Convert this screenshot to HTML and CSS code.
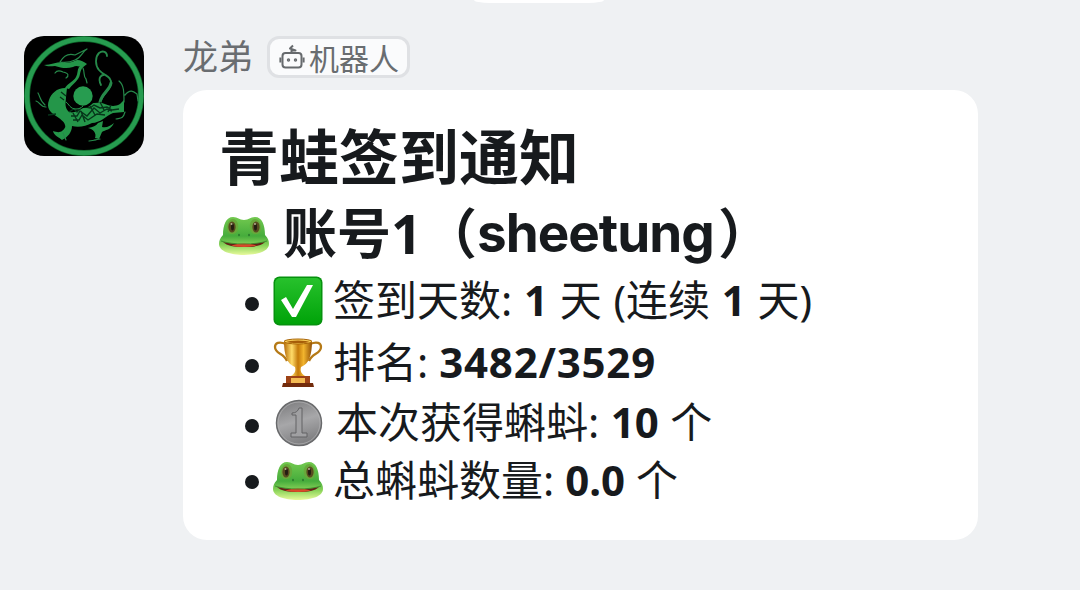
FILE: index.html
```html
<!DOCTYPE html>
<html lang="zh-CN">
<head>
<meta charset="UTF-8">
<title>青蛙签到通知</title>
<link rel="stylesheet" href="styles.css">
</head>
<body>
<svg class="defs" width="0" height="0" aria-hidden="true">
  <defs>
    <linearGradient id="skin" x1="0" y1="0" x2="0" y2="1"><stop offset="0" stop-color="#72c94f"/><stop offset=".5" stop-color="#46ac3c"/><stop offset=".75" stop-color="#8bd45a"/><stop offset="1" stop-color="#e8fa9c"/></linearGradient>
    <linearGradient id="green" x1="0" y1="0" x2="0" y2="1"><stop offset="0" stop-color="#27c12c"/><stop offset="1" stop-color="#00a309"/></linearGradient>
    <linearGradient id="gold" x1="0" y1="0" x2="1" y2="0"><stop offset="0" stop-color="#b56b08"/><stop offset=".28" stop-color="#ffdc69"/><stop offset=".5" stop-color="#c47a09"/><stop offset=".7" stop-color="#f2b52e"/><stop offset="1" stop-color="#925006"/></linearGradient>
    <linearGradient id="silver" x1="0" y1="0" x2=".3" y2="1"><stop offset="0" stop-color="#777779"/><stop offset=".55" stop-color="#a7a7a9"/><stop offset="1" stop-color="#818183"/></linearGradient>
    <symbol id="frog" viewBox="0 0 50 40">
      <path d="M4 19C4 9 7 1 14 1c5 0 6 3 11 3s6-3 11-3c7 0 10 8 10 18 3 3 4 6 4 9 0 7-11 11-25 11S0 35 0 28c0-3 1-6 4-9z" fill="url(#skin)"/>
      <path d="M8 12c0-6 3-9 6-9s6 4 5 9c0 4-3 6-6 6s-5-2-5-6zm34 0c0-6-3-9-6-9s-6 4-5 9c0 4 3 6 6 6s5-2 5-6z" fill="#68a93b"/>
      <ellipse cx="13" cy="11" rx="3.6" ry="5.5" fill="#594b20"/><ellipse cx="37" cy="11" rx="3.6" ry="5.5" fill="#594b20"/>
      <ellipse cx="13.5" cy="11" rx="1.5" ry="3.5" fill="#241d12"/><ellipse cx="36.5" cy="11" rx="1.5" ry="3.5" fill="#241d12"/>
      <circle cx="12.5" cy="8" r="1" fill="#b5b191"/><circle cx="36" cy="8" r="1" fill="#b5b191"/>
      <ellipse cx="20" cy="19" rx=".8" ry="1.2" fill="#28732a"/><ellipse cx="30" cy="19" rx=".8" ry="1.2" fill="#28732a"/>
      <path d="M4 26c12 3 30 3 42 0-4 4-11 5-21 5S8 30 4 26z" fill="#652016"/><path d="M12 29.5q13-4 26 0-13 3-26 0z" fill="#d94a29"/>
      <path d="M2 25c12 4 34 4 46 0" fill="none" stroke="#2b7b22" stroke-width=".7"/>
    </symbol>
  </defs>
</svg>
<div class="previous"></div>
<main class="message">
  <svg class="avatar" viewBox="0 0 120 120">
    <rect width="120" height="120" fill="#000"/>
    <circle cx="60" cy="60" r="57" fill="none" stroke="#0d6529" stroke-width="6"/>
    <circle cx="60" cy="60" r="57" fill="none" stroke="#279c50" stroke-width="4.5"/>
    <g fill="#249649" stroke-linejoin="round">
      <path d="M20 29c7 0 12-3 18-3 6 2 10 0 15-2 4 0 7 2 10 4l-5 4c-3-2-6-3-9-1-6 2-12 1-18-1-4 0-7 1-11-1z"/>
      <path d="M59 31c-4 5-2 8-5 12-3 4-6 6-9 10l-4-1c3-5 9-7 11-11 2-3 1-7 3-10z"/>
      <path d="M43 52c-9-1-16 5-18 12-3 8 1 12 7 16 4 3 8 5 9 9 2 6-1 11-3 15 6-3 10-8 10-14 7 2 14 0 20-3 8 0 14-7 21-10l11-1V64l-4 4c-7 4-12 1-18-1-8-1-14 1-19 5-6 4-12 6-15 3-4-5-2-9-2-14z"/>
      <path d="M29 95c6 2 9 2 13-5l1 7-5 7c-3-3-8-4-9-9z"/>
      <path d="M64 92c5-1 8-2 10-5l5-2-1 6c5 1 8-1 12-4-3 7-9 7-12 9l-3 7-4-1c2-5-2-9-7-10z"/>
    </g>
    <g fill="none" stroke="#26894a" stroke-width="1.2" stroke-linecap="round" stroke-linejoin="round">
      <path d="M36 26c4-7 9-9 15-7l12-6c-5 3-6 9-12 11-4 2-8 3-15 2zM31 37c2-3 6-2 8-1 6 1 6 4 3 6M59 32c2 5 0 8 3 11l1 4M92 83c5-1 7 0 9-7M100 66c0-10 0-17-5-21m6 14c5-6 8-4 12-1l1 7M21 69C16 65 16 60 14 57m8 14c-6 0-6-5-10-6M39 97l3 7m28 0l6-1m-11 2l7-1"/>
      <path d="M83 20c0-4-4-6-8-3-4 4-4 12 0 17 5 6 13 6 12 14-1 7-9 10-11 19M77 49c-4-8 1-11 5-10" stroke-width="1.8"/>
      <path d="M87 47c-1 7-9 10-11 19" stroke-width="3"/>
    </g>
    <path d="M45 76l5-3 3 3 5-6 8 2 4-3 6 3 7-1 5 3 7-1M47 80h6l3-5 7 5 7-8 6 5 7-4 5 2M49 84h6l3-5 6 5 9-6 8 1M76 66l4 8M87 69l-3 7M66 70l5 9M49 77l5 9m3-11l4 11m-29-8l-8 1m13-23l5 4m-6 1l4 3" fill="none" stroke="#06351a" stroke-width="1.4"/>
    <circle cx="59" cy="60" r="12" fill="#000"/><circle cx="59" cy="60" r="9.7" fill="#279c50"/>
    <path d="M42 66c3 2 4 7 10 7 3 0 5-1 7-3" fill="none" stroke="#279c50"/>
  </svg>
  <div class="content">
    <header class="sender">
      <span class="name">龙弟</span>
      <span class="badge">
        <svg class="robot" viewBox="0 0 26 26" fill="none" stroke="#666a6d" stroke-width="2"><rect x="3.5" y="9" width="19" height="14.5" rx="3"/><path d="M1.4 13.5v5M24.6 13.5v5M12.5 9V6.5h4L11 4.5l3-3" stroke-linejoin="round"/><circle cx="9.5" cy="16" r=".7"/><circle cx="16.5" cy="16" r=".7"/></svg>
        <span>机器人</span>
      </span>
    </header>
    <section class="card">
      <h1>青蛙签到通知</h1>
      <h2><svg class="frog"><use href="#frog"/></svg><span class="account">账号1</span><span class="paren open">（</span><span class="user">sheetung</span><span class="paren">）</span></h2>
      <ul>
        <li class="days"><i></i><svg class="emoji" viewBox="0 0 50 50"><rect x=".5" y=".5" width="49" height="49" rx="6" fill="#06920e"/><rect x="2" y="2" width="46" height="46" rx="5" fill="url(#green)"/><path d="M8 24l5-3 7 12L34 9h6L23 41h-4z" fill="#fff"/></svg><p>签到天数: <b>1</b> 天 (连续 <b>1</b> 天)</p></li>
        <li class="rank"><i></i><svg class="emoji" viewBox="0 0 50 50"><path d="M13 6C6 3 2 5 2 9c0 7 9 6 12 14M37 6c7-3 11-1 11 3 0 7-9 6-12 14" fill="none" stroke="#b57916" stroke-width="2.3"/><path d="M11 3h28c0 14-3 23-11 26-1 4 0 6 4 9H18c4-3 5-5 4-9C14 26 11 17 11 3z" fill="url(#gold)"/><ellipse cx="25" cy="3.5" rx="14" ry="2.5" fill="#f8cd56" stroke="#a96508"/><ellipse cx="25" cy="3.8" rx="11" ry="1.2" fill="#a65d08"/><path d="M13 38h24v8H13z" fill="#9e4216"/><path d="M10 45h30l1 4H9z" fill="#722b0c"/><path d="M18 40h14v5H18z" fill="#f3ba52"/></svg><p>排名: <b>3482/3529</b></p></li>
        <li class="earned"><i></i><svg class="emoji" viewBox="0 0 50 50"><circle cx="26" cy="25" r="22.5" fill="url(#silver)" stroke="#68696b" stroke-width="1.5"/><circle cx="26" cy="25" r="21" fill="none" stroke="#b1b1b3" stroke-width=".7"/><path d="M19 15c4 0 6-2 7-5h3v25h5v4H18v-4h5V17h-4z" fill="#a0a0a2" stroke="#636365"/></svg><p>本次获得蝌蚪: <b>10</b> 个</p></li>
        <li class="total"><i></i><svg class="frog"><use href="#frog"/></svg><p>总蝌蚪数量: <b>0.0</b> 个</p></li>
      </ul>
    </section>
  </div>
</main>
</body>
</html>
```
FILE: styles.css
```css
* { box-sizing: border-box; }
body { margin: 0; height: 590px; overflow: hidden; background: #eff1f3; color: #171a1d; font-family: "Noto Sans", "Noto Sans CJK SC", sans-serif; }
.defs { position: absolute; }
.previous { width: 130px; height: 3px; margin-left: 474px; background: #fff; border-radius: 0 0 16px 16px / 0 0 3px 3px; }
.message { display: flex; gap: 39px; padding: 33px 24px 0; }
.avatar { width: 120px; height: 120px; border-radius: 20px; flex: none; }
.content { width: 795px; }
.sender { height: 54px; display: flex; align-items: flex-start; gap: 14px; color: #696d70; }
.name { font-size: 35px; line-height: 42px; width: 70px; }
.badge { display: flex; align-items: center; width: 143px; height: 42px; padding-left: 9px; gap: 4px; border: 3px solid #dfe1e4; border-radius: 12px; background: #fafbfc; font-size: 30px; line-height: 38px; }
.badge span { padding-top: 3px; }
.robot { width: 26px; height: 26px; flex: none; }
.card { height: 450px; padding: 30px 36px; border-radius: 24px; background: #fff; }
h1, h2, ul, p { margin: 0; padding: 0; }
h1 { font-size: 60px; line-height: 74px; height: 76px; white-space: nowrap; }
h2 { display: flex; align-items: center; height: 74px; font-size: 54px; line-height: 74px; white-space: nowrap; }
h2 .frog { margin-top: 6px; }
.frog { width: 50px; height: 40px; flex: none; }
.account { width: 138px; margin-left: 14px; }
.paren { width: 54px; }
.open { margin-left: 2px; }
.user { width: 241px; font-family: Inter, sans-serif; font-size: 53px; letter-spacing: -1px; }
ul { list-style: none; padding-left: 26px; }
li { display: flex; align-items: center; height: 60px; font-size: 42px; line-height: 60px; white-space: nowrap; }
li i { width: 14px; height: 14px; border-radius: 50%; background: #171a1d; margin: 6px 14px 0 0; flex: none; }
li p { margin: -2px 0 0 10px; }
.emoji { width: 50px; height: 50px; flex: none; }
.days { height: 62px; word-spacing: .8px; }
.rank { height: 62px; }
.rank b { letter-spacing: .8px; }
.earned { height: 58px; word-spacing: .5px; }
.earned p { margin-left: 13px; }
.total { height: 58px; }
.total i { margin-top: 2px; }
```
